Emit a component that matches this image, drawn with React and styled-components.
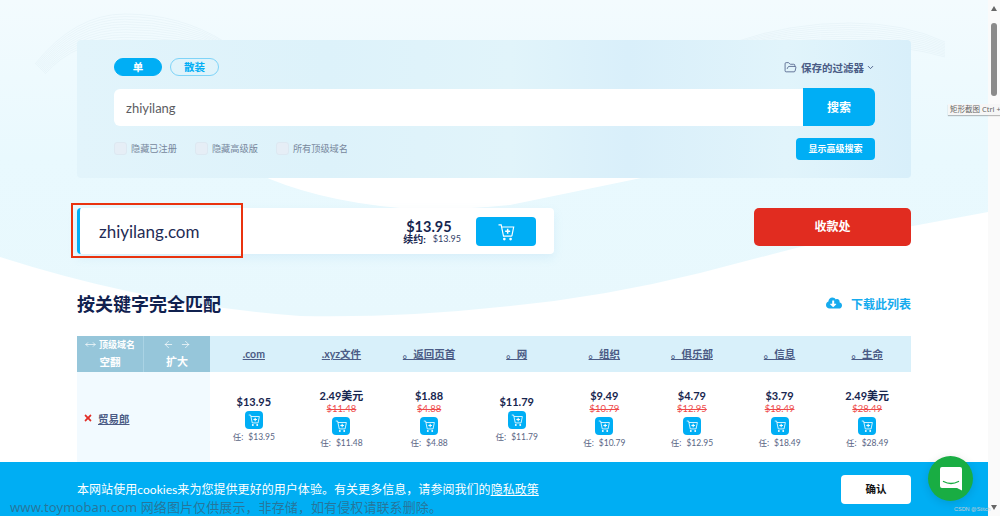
import styled, { createGlobalStyle } from 'styled-components';
import { FolderOpen, ChevronDown, ArrowLeft, ArrowRight, MoveHorizontal } from 'lucide-react';
import { FaCloudDownloadAlt, FaTimes } from 'react-icons/fa';

const FONT = `Lato, "Noto Sans CJK SC", sans-serif`;
const BLUE = '#00aef5';
const NAVY = '#17264f';

const GlobalStyle = createGlobalStyle`
	html, body {
		margin: 0;
		padding: 0;
		height: 516px;
		overflow: hidden;
		background: #fff;
	}
	* {
		box-sizing: border-box;
	}
`;

const Shell = styled.div`
	position: relative;
	display: flex;
	width: 1000px;
	height: 516px;
	overflow: hidden;
	font-family: ${FONT};
	color: ${NAVY};
`;

const Main = styled.main`
	position: relative;
	width: 988px;
	height: 516px;
	padding: 40px 77px 0;
	overflow: hidden;
`;

const Backdrop = styled.svg`
	position: absolute;
	top: 0;
	left: 0;
`;

const Scrollbar = styled.div`
	width: 12px;
	background: #fafafa;
	display: flex;
	flex-direction: column;
	align-items: center;
	padding-top: 6px;
`;

const ScrollArrow = styled.div`
	width: 0;
	height: 0;
	border-left: 3.5px solid transparent;
	border-right: 3.5px solid transparent;
	border-bottom: 5px solid #666;
`;

const ScrollThumb = styled.div`
	width: 6px;
	height: 73px;
	margin-top: 12px;
	border-radius: 3px;
	background: #8a8a8a;
`;

const SearchPanel = styled.section`
	position: relative;
	height: 138px;
	padding: 18px 36px 0 37px;
	border-radius: 4px;
	background: linear-gradient(90deg, #e2f4fb 0%, #ddf2fa 30%, #e1f4fa 52%, #d9effa 66%, #e1f4fb 85%, #d8effa 100%);
`;

const PanelTop = styled.div`
	display: flex;
	align-items: center;
	justify-content: space-between;
	height: 18px;
`;

const Pills = styled.div`
	display: flex;
	gap: 8px;
`;

const Pill = styled.button`
	width: ${(p) => (p.$active ? '48px' : '49px')};
	height: 18px;
	padding: 0 0 2px;
	border-radius: 9px;
	border: 1px solid ${(p) => (p.$active ? BLUE : '#7fd4f8')};
	background: ${(p) => (p.$active ? BLUE : 'transparent')};
	color: ${(p) => (p.$active ? '#fff' : BLUE)};
	font: 700 10.5px ${FONT};
`;

const SavedFilters = styled.div`
	display: flex;
	align-items: center;
	color: #4a5b85;
	font-size: 10.5px;
	font-weight: 700;
`;

const FilterLabel = styled.span`
	margin: 0 2px 0 4px;
`;

const SearchBar = styled.div`
	display: flex;
	height: 38px;
	margin-top: 12px;
`;

const SearchInput = styled.div`
	flex: 1;
	display: flex;
	align-items: center;
	padding: 0 0 0 12px;
	margin-top: 1px;
	height: 37px;
	background: #fff;
	border-radius: 6px 0 0 6px;
	color: #5c5c62;
	font-size: 13px;
`;

const SearchButton = styled.button`
	width: 72px;
	border: none;
	padding: 0 0 2px;
	border-radius: 0 6px 6px 0;
	background: ${BLUE};
	color: #fff;
	font: 700 12px ${FONT};
`;

const OptionRow = styled.div`
	display: flex;
	align-items: flex-start;
	justify-content: space-between;
	margin-top: 12px;
`;

const Options = styled.div`
	display: flex;
	gap: 18px;
	padding-top: 4px;
`;

const Option = styled.label`
	display: flex;
	align-items: center;
	gap: 4px;
	color: #77879c;
	font-size: 9.2px;
	line-height: 11px;
	padding-bottom: 1px;
`;

const Checkbox = styled.span`
	width: 13px;
	height: 13px;
	border-radius: 3px;
	border: 1px solid #dde8f1;
	background: #e6eef6;
`;

const AdvancedButton = styled.button`
	width: 79px;
	height: 22px;
	padding: 0 0 1px;
	border: none;
	border-radius: 4px;
	background: ${BLUE};
	color: #fff;
	font: 700 9px ${FONT};
`;

const ResultRow = styled.section`
	position: relative;
	display: flex;
	justify-content: space-between;
	align-items: flex-start;
	margin-top: 30px;
`;

const DomainCard = styled.div`
	position: relative;
	display: flex;
	align-items: center;
	width: 477px;
	height: 46px;
	padding: 0 18px 0 19px;
	background: #fff;
	border-left: 3px solid ${BLUE};
	border-radius: 4px;
	box-shadow: 0 4px 10px rgba(120, 190, 230, 0.15);
`;

const DomainName = styled.div`
	flex: 1;
	font-size: 17px;
	color: #1f2c55;
`;

const PriceBlock = styled.div`
	display: flex;
	flex-direction: column;
	margin-right: 15px;
	padding-top: 2px;
`;

const BigPrice = styled.div`
	margin-left: 3px;
	font-size: 14.5px;
	font-weight: 700;
	line-height: 12px;
`;

const Renewal = styled.div`
	display: flex;
	gap: 7px;
	margin-top: 1px;
	font-size: 9px;
	line-height: 10px;
	color: #33416a;
`;

const RenewalLabel = styled.b`
	color: ${NAVY};
	font-size: 10px;
`;

const AddButton = styled.button`
	display: flex;
	align-items: center;
	justify-content: center;
	width: 60px;
	height: 29px;
	margin-top: 1px;
	padding: 0;
	border: none;
	border-radius: 4px;
	background: ${BLUE};
`;

const Highlight = styled.div`
	position: absolute;
	left: -9px;
	top: -5px;
	width: 172px;
	height: 55px;
	border: 2px solid #e9330f;
	pointer-events: none;
`;

const CheckoutButton = styled.button`
	width: 157px;
	height: 38px;
	padding: 0 0 3px;
	border: none;
	border-radius: 5px;
	background: #e12c20;
	color: #fff;
	font: 700 12px ${FONT};
`;

const SectionHead = styled.div`
	position: relative;
	display: flex;
	align-items: center;
	justify-content: space-between;
	height: 24px;
	margin-top: 37px;
`;

const Heading = styled.h2`
	margin: 0;
	font-size: 18px;
	font-weight: 700;
	color: #10214f;
`;

const DownloadLink = styled.a`
	display: flex;
	align-items: center;
	gap: 9px;
	color: #16abee;
	font-size: 12px;
	font-weight: 700;
`;

const Table = styled.div`
	position: relative;
	display: grid;
	grid-template-columns: 66px 67px repeat(8, 1fr);
	grid-template-rows: 36px 94px;
	margin-top: 21px;
`;

const SideHead = styled.div`
	display: flex;
	flex-direction: column;
	align-items: center;
	justify-content: center;
	gap: 5px;
	padding-bottom: 3px;
	background: #96c6da;
	color: #fff;
	border-left: ${(p) => (p.$wide ? '1px solid #aad3e4' : 'none')};
`;

const SideLine = styled.div`
	display: flex;
	align-items: center;
	justify-content: center;
	gap: ${(p) => p.$gap || '3px'};
	height: 12px;
	font-size: ${(p) => p.$size || '9px'};
	font-weight: ${(p) => p.$weight || 700};
`;

const ColHead = styled.div`
	display: flex;
	align-items: center;
	justify-content: center;
	padding-bottom: 1px;
	background: #d8f0fa;
	color: #4b5b85;
	font-size: 10.5px;
	font-weight: 700;
	text-decoration: underline;
`;

const KeywordCell = styled.div`
	grid-column: span 2;
	display: flex;
	align-items: center;
	gap: 5px;
	padding: 0 0 2px 6px;
	background: #f2faff;
	color: #4b5b85;
	font-size: 10.5px;
	font-weight: 700;
`;

const KeywordLink = styled.span`
	text-decoration: underline;
`;

const PriceCell = styled.div`
	display: flex;
	flex-direction: column;
	align-items: center;
	justify-content: center;
	background: #fff;
`;

const Price = styled.div`
	font-size: 11px;
	line-height: 14px;
	font-weight: 700;
`;

const OldPrice = styled.div`
	font-size: 9.5px;
	line-height: 12px;
	color: #ee4b4b;
	text-decoration: line-through;
`;

const CartButton = styled.button`
	display: flex;
	align-items: center;
	justify-content: center;
	width: 18px;
	height: 18px;
	margin-top: 2px;
	padding: 0;
	border: none;
	border-radius: 4px;
	background: ${BLUE};
`;

const RenewPrice = styled.div`
	display: flex;
	gap: 5px;
	margin-top: 3px;
	font-size: 8.5px;
	line-height: 11px;
	color: #5a6685;
`;

const CookieBar = styled.div`
	position: absolute;
	left: 0;
	top: 462px;
	display: flex;
	align-items: center;
	justify-content: space-between;
	width: 988px;
	height: 54px;
	padding: 0 77px;
	background: #00aef3;
	color: #fff;
	font-size: 12px;
	letter-spacing: 0.05px;
`;

const CookieText = styled.span`
	padding-bottom: 2px;
`;

const PrivacyLink = styled.a`
	text-decoration: underline;
`;

const ConfirmButton = styled.button`
	width: 70px;
	height: 29px;
	padding: 0 0 2px;
	border: none;
	border-radius: 4px;
	background: #fff;
	color: #111;
	font: 700 10.5px ${FONT};
`;

const Watermark = styled.div`
	position: absolute;
	left: 10px;
	top: 499px;
	color: rgba(70, 70, 80, 0.55);
	font-family: "Noto Sans", "Noto Sans CJK SC", sans-serif;
	font-size: 13px;
	line-height: 17px;
	letter-spacing: 0.1px;
	white-space: nowrap;
`;

const ChatBubble = styled.div`
	position: absolute;
	left: 928px;
	top: 456px;
	display: flex;
	align-items: center;
	justify-content: center;
	width: 45px;
	height: 45px;
	border-radius: 50%;
	background: #19ad43;
	box-shadow: 0 2px 10px rgba(0, 0, 0, 0.12);
`;

const SnipTip = styled.div`
	position: absolute;
	left: 948px;
	top: 104px;
	width: 60px;
	height: 11px;
	padding-left: 2px;
	background: #f6f6f6;
	box-shadow: 0 1px 1px rgba(0, 0, 0, 0.25);
	color: #666;
	font-family: "Noto Sans", "Noto Sans CJK SC", sans-serif;
	font-size: 7.5px;
	line-height: 11px;
	white-space: nowrap;
`;

const CsdnMark = styled.div`
	position: absolute;
	left: 954px;
	top: 505px;
	color: #c4ccd2;
	font-family: "Liberation Sans", sans-serif;
	font-size: 5.5px;
	line-height: 8px;
	white-space: nowrap;
`;

const CornerArrow = styled.div`
	position: absolute;
	left: 991px;
	top: 505px;
	width: 0;
	height: 0;
	border-left: 3.5px solid transparent;
	border-right: 3.5px solid transparent;
	border-top: 5px solid #666;
`;

const CartIcon = ({ size }) => (
	<svg width={size} height={size} viewBox="0 0 24 24" fill="none" stroke="#fff" strokeWidth="1.4">
		<path d="M3 3.5h3.2L9 17h10M6.8 6h14.4L19 17" />
		<path d="M14 8v6M11 11h6" strokeWidth="1.8" />
		<circle cx="10" cy="20.5" r="1.6" fill="#fff" stroke="none" />
		<circle cx="17.5" cy="20.5" r="1.6" fill="#fff" stroke="none" />
	</svg>
);

const ArcLines = () => {
	const rows = Array.from({ length: 11 }, (_, i) => i);
	return (
		<g fill="none" stroke="#e0eff5" strokeWidth="0.5">
			{rows.map((i) => (
				<path key={`l${i}`} d={`M${35 + i} ${64 + i} Q75 ${14 + i * 2.6} 125 ${14 + i * 2.6} Q180 ${14 + i * 2.6} 225 ${42 + i}`} />
			))}
			{rows.map((i) => (
				<path key={`r${i}`} d={`M735 ${42 + i} Q790 ${23 + i * 2.2} 850 ${23 + i * 2.2} Q905 ${23 + i * 2.2} 945 ${42 + i * 1.5}`} />
			))}
		</g>
	);
};

const TLDS = ['.com', '.xyz文件', '。返回页首', '。网', '。组织', '。俱乐部', '。信息', '。生命'];

const PRICES = [
	{ price: '$13.95', renew: '$13.95' },
	{ price: '2.49美元', old: '$11.48', renew: '$11.48' },
	{ price: '$1.88', old: '$4.88', renew: '$4.88' },
	{ price: '$11.79', renew: '$11.79' },
	{ price: '$9.49', old: '$10.79', renew: '$10.79' },
	{ price: '$4.79', old: '$12.95', renew: '$12.95' },
	{ price: '$3.79', old: '$18.49', renew: '$18.49' },
	{ price: '2.49美元', old: '$28.49', renew: '$28.49' },
];

const App = () => {
	return (
		<>
			<GlobalStyle />
			<Shell>
				<Main>
					<Backdrop width="988" height="340" viewBox="0 0 988 340">
						<defs>
							<linearGradient id="wash" x1="0" y1="0" x2="0" y2="1">
								<stop offset="0" stopColor="#f3fbfe" />
								<stop offset="0.5" stopColor="#e9f9fe" />
								<stop offset="1" stopColor="#e8f8fd" />
							</linearGradient>
						</defs>
						<path d="M0 0H988V212L800 247L700 273Q600 298 500 307Q400 318 300 316Q150 305 0 257Z" fill="url(#wash)" />
						<path d="M250 170Q310 200 400 208Q450 211 510 205L680 170Z" fill="#fff" />
						<ArcLines />
					</Backdrop>

					<SearchPanel>
						<PanelTop>
							<Pills>
								<Pill $active>单</Pill>
								<Pill>散装</Pill>
							</Pills>
							<SavedFilters>
								<FolderOpen size={13} strokeWidth={1.5} />
								<FilterLabel>保存的过滤器</FilterLabel>
								<ChevronDown size={9} strokeWidth={2.5} />
							</SavedFilters>
						</PanelTop>
						<SearchBar>
							<SearchInput>zhiyilang</SearchInput>
							<SearchButton>搜索</SearchButton>
						</SearchBar>
						<OptionRow>
							<Options>
								<Option><Checkbox />隐藏已注册</Option>
								<Option><Checkbox />隐藏高级版</Option>
								<Option><Checkbox />所有顶级域名</Option>
							</Options>
							<AdvancedButton>显示高级搜索</AdvancedButton>
						</OptionRow>
					</SearchPanel>

					<ResultRow>
						<DomainCard>
							<DomainName>zhiyilang.com</DomainName>
							<PriceBlock>
								<BigPrice>$13.95</BigPrice>
								<Renewal>
									<RenewalLabel>续约:</RenewalLabel>
									<span>$13.95</span>
								</Renewal>
							</PriceBlock>
							<AddButton><CartIcon size={20} /></AddButton>
							<Highlight />
						</DomainCard>
						<CheckoutButton>收款处</CheckoutButton>
					</ResultRow>

					<SectionHead>
						<Heading>按关键字完全匹配</Heading>
						<DownloadLink>
							<FaCloudDownloadAlt size={16} />
							下载此列表
						</DownloadLink>
					</SectionHead>

					<Table>
						<SideHead>
							<SideLine>
								<MoveHorizontal size={11} strokeWidth={1.5} />
								顶级域名
							</SideLine>
							<SideLine $size="10.5px">空翻</SideLine>
						</SideHead>
						<SideHead $wide>
							<SideLine $gap="6px">
								<ArrowLeft size={11} strokeWidth={1.5} />
								<ArrowRight size={11} strokeWidth={1.5} />
							</SideLine>
							<SideLine $size="11px">扩大</SideLine>
						</SideHead>
						{TLDS.map((tld) => (
							<ColHead key={tld}>{tld}</ColHead>
						))}
						<KeywordCell>
							<FaTimes size={10} color="#e22d26" />
							<KeywordLink>贸易郎</KeywordLink>
						</KeywordCell>
						{PRICES.map((item, i) => (
							<PriceCell key={i}>
								<Price>{item.price}</Price>
								{item.old && <OldPrice>{item.old}</OldPrice>}
								<CartButton><CartIcon size={14} /></CartButton>
								<RenewPrice>
									<span>任:</span>
									<span>{item.renew}</span>
								</RenewPrice>
							</PriceCell>
						))}
					</Table>

					<CookieBar>
						<CookieText>
							本网站使用cookies来为您提供更好的用户体验。有关更多信息，请参阅我们的
							<PrivacyLink>隐私政策</PrivacyLink>
						</CookieText>
						<ConfirmButton>确认</ConfirmButton>
					</CookieBar>
					<Watermark>www.toymoban.com 网络图片仅供展示，非存储，如有侵权请联系删除。</Watermark>
				</Main>
				<Scrollbar>
					<ScrollArrow />
					<ScrollThumb />
				</Scrollbar>
				<SnipTip>矩形截图 Ctrl +</SnipTip>
				<ChatBubble>
					<svg width="24" height="26" viewBox="0 0 24 26">
						<path d="M3 1h18a2 2 0 0 1 2 2v21.5l-5-2.5H3a2 2 0 0 1-2-2V3a2 2 0 0 1 2-2z" fill="#fff" />
						<path d="M4.5 15.5Q12 19.5 19.5 15.5" fill="none" stroke="#19ad43" strokeWidth="1.4" strokeLinecap="round" />
					</svg>
				</ChatBubble>
				<CsdnMark>CSDN @Stitch</CsdnMark>
				<CornerArrow />
			</Shell>
		</>
	);
};

export default App;
